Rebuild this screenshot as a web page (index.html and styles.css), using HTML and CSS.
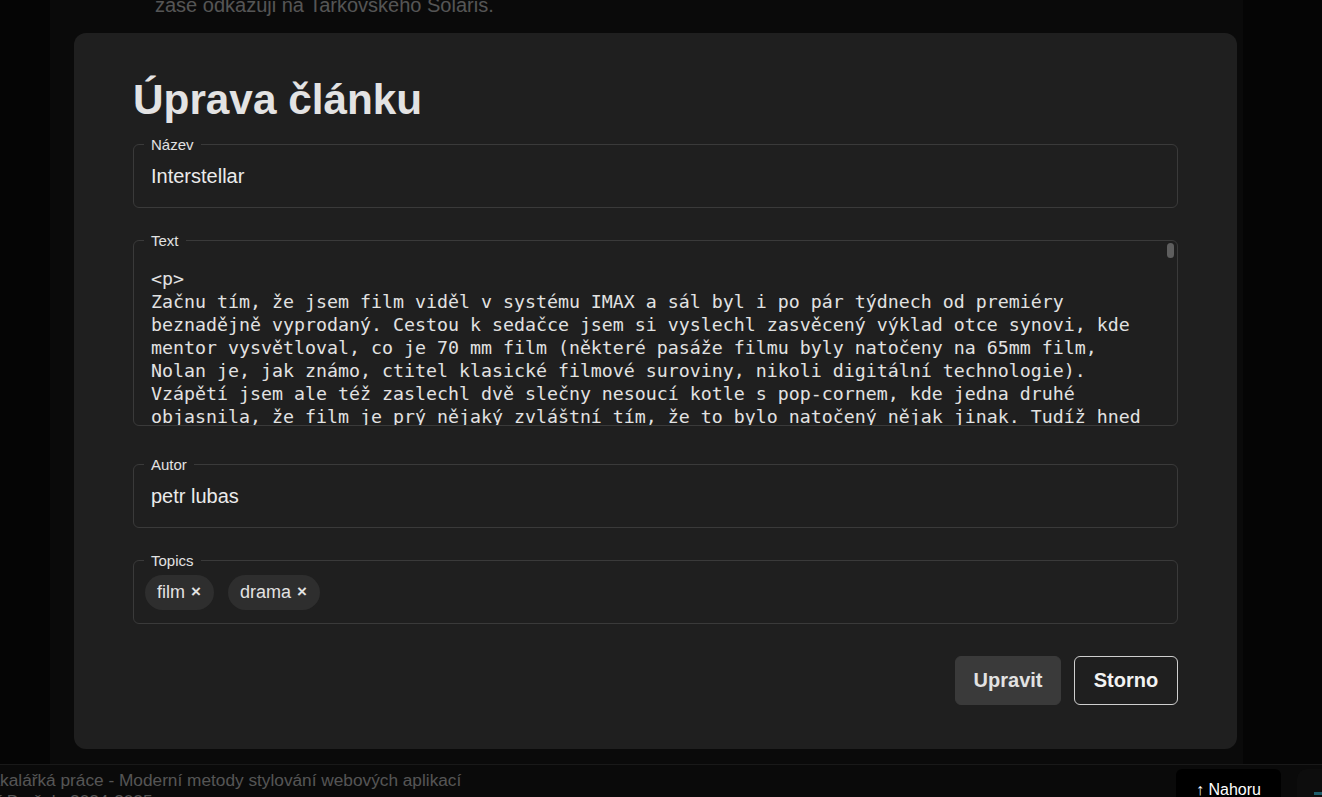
FILE: index.html
```html
<!DOCTYPE html>
<html lang="cs">
<head>
<meta charset="utf-8">
<title>Úprava článku</title>
<link rel="stylesheet" href="styles.css">
</head>
<body>
<div class="page">
  <main class="column">
    <p class="article-tail">zase odkazuji na Tarkovského Solaris.</p>
  </main>
  <footer class="site-footer">
    <p>Bakalářká práce - Moderní metody stylování webových aplikací</p>
    <p>Jiří Brožek, 2024-2025</p>
  </footer>
</div>

<div class="backdrop"></div>

<a class="to-top" href="#">↑ Nahoru</a>
<div class="corner-widget"><span class="corner-bar"></span></div>

<section class="modal" role="dialog" aria-labelledby="modal-title">
  <h1 id="modal-title" class="modal-title">Úprava článku</h1>
  <form class="edit-form">
    <fieldset class="field">
      <legend>Název</legend>
      <input class="field-input" type="text" value="Interstellar">
    </fieldset>

    <fieldset class="field field-text">
      <legend>Text</legend>
      <textarea class="field-area">&lt;p&gt;
Začnu tím, že jsem film viděl v systému IMAX a sál byl i po pár týdnech od premiéry
beznadějně vyprodaný. Cestou k sedačce jsem si vyslechl zasvěcený výklad otce synovi, kde
mentor vysvětloval, co je 70 mm film (některé pasáže filmu byly natočeny na 65mm film,
Nolan je, jak známo, ctitel klasické filmové suroviny, nikoli digitální technologie).
Vzápětí jsem ale též zaslechl dvě slečny nesoucí kotle s pop-cornem, kde jedna druhé
objasnila, že film je prý nějaký zvláštní tím, že to bylo natočený nějak jinak. Tudíž hned
jsem věděl, že mě čeká něco víc než jen obyčejná podívaná. A nemýlil jsem se.
&lt;/p&gt;
&lt;p&gt;
Příběh nás zavádí do nepříliš vzdálené budoucnosti, kdy Zemi sužují písečné bouře a plíseň ničí jednu plodinu za druhou. Bývalý pilot NASA Cooper, nyní farmář a otec dvou dětí, se nečekaně dostane k tajnému projektu, jehož cílem je najít lidstvu nový domov za hranicemi naší sluneční soustavy. Skrze červí díru poblíž Saturnu se vydává s malou posádkou vstříc neznámu, zatímco doma zůstává jeho dcera Murph, která mu nikdy neodpustí, že odešel.
&lt;/p&gt;
&lt;p&gt;
Nolan zde opět pracuje s časem jako s hlavním tématem. Každá hodina na planetě poblíž černé díry Gargantua znamená sedm let na Zemi a tato skutečnost dává celému příběhu nečekaně silný emocionální náboj. Scéna, ve které Cooper sleduje nahromaděné video zprávy od svých dětí, patří k tomu nejsilnějšímu, co jsem v kině v posledních letech viděl.
&lt;/p&gt;
&lt;p&gt;
Vizuální stránka filmu je ohromující. Zobrazení černé díry vzniklo ve spolupráci s fyzikem Kipem Thornem a výsledek je natolik přesný, že posloužil i jako podklad pro vědecké články. Hudba Hanse Zimmera s dominantními varhanami pak dodává celému dílu téměř posvátnou atmosféru, která vás nepustí ani dlouho po závěrečných titulcích.
&lt;/p&gt;
&lt;p&gt;
Film samozřejmě není bez chyb. Některé dialogy působí příliš vysvětlujícím dojmem a závěrečná třetina může část diváků zmást. Přesto jde o odvážné a ambiciózní dílo, které se nebojí klást velké otázky o lásce, obětování a místě člověka ve vesmíru. Srovnání s Kubrickovou Vesmírnou odyseou se nabízí samo a mnozí kritici zase odkazují na Tarkovského Solaris.
&lt;/p&gt;</textarea>
      <span class="scroll-thumb" aria-hidden="true"></span>
    </fieldset>

    <fieldset class="field">
      <legend>Autor</legend>
      <input class="field-input" type="text" value="petr lubas">
    </fieldset>

    <fieldset class="field">
      <legend>Topics</legend>
      <div class="chips">
        <span class="chip">film<span class="chip-remove">×</span></span>
        <span class="chip">drama<span class="chip-remove">×</span></span>
      </div>
    </fieldset>

    <div class="actions">
      <button type="submit" class="btn btn-primary">Upravit</button>
      <button type="button" class="btn btn-outline">Storno</button>
    </div>
  </form>
</section>
</body>
</html>
```

FILE: styles.css
```css
* {
  box-sizing: border-box;
}

html,
body {
  margin: 0;
  height: 100%;
  overflow: hidden;
}

body {
  background: #0a0a0a;
  font-family: "Liberation Sans", Arial, sans-serif;
  color: #ddd;
}

/* ---------- page behind the dialog ---------- */
.column {
  margin-left: 50px;
  width: 1193px;
  height: 764px;
  background: #151515;
  overflow: hidden;
}

.article-tail {
  margin: -10px 0 0 105px;
  font-size: 20px;
  line-height: 30px;
  color: #aaa;
}

.site-footer {
  border-top: 1px solid #333;
  background: #141414;
  padding-top: 5px;
  font-size: 17.25px;
  line-height: 20.7px;
  color: #aaa;
}

.site-footer p {
  margin: 0 0 0 -21px;
}

.backdrop {
  position: fixed;
  inset: 0;
  background: rgba(0, 0, 0, 0.5);
}

.to-top {
  position: fixed;
  left: 1176px;
  top: 769px;
  width: 105px;
  height: 46px;
  padding-top: 12px;
  background: #000;
  border-radius: 6px;
  color: #fff;
  font-size: 16px;
  line-height: 18.4px;
  text-align: center;
  text-decoration: none;
}

.corner-widget {
  position: fixed;
  left: 1297px;
  top: 769px;
  width: 44px;
  height: 44px;
  border-radius: 10px;
  background: #0d0d0d;
}

.corner-bar {
  position: absolute;
  left: 17px;
  top: 23px;
  width: 10px;
  height: 3px;
  background: #1f5d6b;
}

/* ---------- dialog ---------- */
.modal {
  position: fixed;
  left: 74px;
  top: 33px;
  width: 1163px;
  height: 716px;
  padding: 42.5px 59px 44px;
  background: #1f1f1f;
  border-radius: 12px;
}

.modal-title {
  margin: 0 0 20.5px;
  font-size: 42.3px;
  line-height: 48px;
  font-weight: 700;
  color: #e3e3e3;
}

.edit-form {
  display: flex;
  flex-direction: column;
}

.field {
  margin: 0 0 32px;
  padding: 0;
  min-width: 0;
  border: 1px solid #3a3a3a;
  border-radius: 6px;
}

.field-text {
  position: relative;
  margin-bottom: 38px;
}

.field legend {
  margin-left: 10px;
  padding: 0 7px;
  font-size: 15px;
  line-height: 0;
  color: #e2e2e2;
}

.field-input {
  display: block;
  width: 100%;
  height: 62px;
  padding: 0 17px;
  border: 0;
  background: transparent;
  color: #ebebeb;
  font-family: "Liberation Sans", Arial, sans-serif;
  font-size: 20px;
  line-height: 62px;
  outline: none;
}

.field-area {
  display: block;
  width: 100%;
  height: 184px;
  padding: 26px 0 0 17px;
  border: 0;
  border-radius: 6px;
  background: transparent;
  color: #e2e2e2;
  font-family: "DejaVu Sans Mono", "Liberation Mono", monospace;
  font-size: 18.27px;
  line-height: 23.05px;
  resize: none;
  outline: none;
  overflow-y: scroll;
}

.field-area::-webkit-scrollbar {
  width: 12px;
}

.field-area::-webkit-scrollbar-track {
  background: transparent;
}

.field-area::-webkit-scrollbar-thumb {
  background: transparent;
}

.scroll-thumb {
  position: absolute;
  top: 2px;
  right: 3px;
  width: 7px;
  height: 15px;
  border-radius: 4px;
  background: #5e5e5e;
}

.chips {
  display: flex;
  align-items: center;
  gap: 14px;
  height: 62px;
  padding-left: 11px;
}

.chip {
  display: inline-flex;
  align-items: center;
  height: 35px;
  padding: 0 13px 0 12px;
  border-radius: 18px;
  background: #2e2e2e;
  color: #e2e2e2;
  font-size: 18px;
}

.chip-remove {
  margin-left: 6px;
  font-size: 17px;
  font-weight: 700;
}

.actions {
  display: flex;
  justify-content: flex-end;
  gap: 13px;
}

.btn {
  height: 49px;
  border-radius: 6px;
  font-family: "Liberation Sans", Arial, sans-serif;
  font-size: 20px;
  font-weight: 700;
  cursor: pointer;
}

.btn-primary {
  padding: 0 17.5px;
  border: 1px solid #3a3a3a;
  background: #3a3a3a;
  color: #e2e2e2;
}

.btn-outline {
  padding: 0 18.8px;
  border: 1px solid #cfcfcf;
  background: transparent;
  color: #f2f2f2;
}
```
